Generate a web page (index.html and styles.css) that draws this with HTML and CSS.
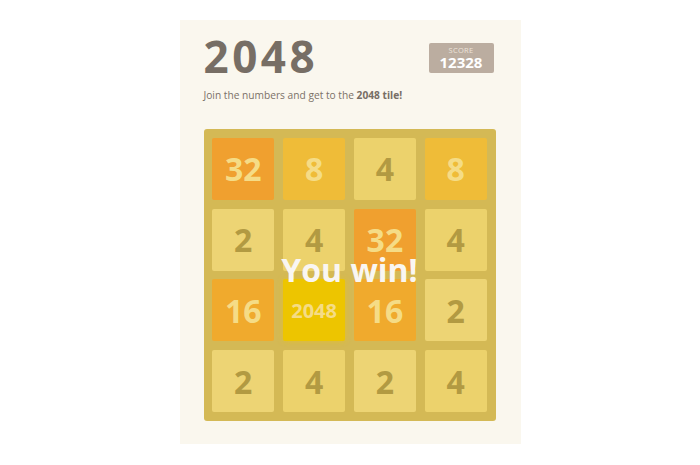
FILE: index.html
```html
<!DOCTYPE html>
<html>
<head>
<meta charset="utf-8">
<link rel="stylesheet" href="styles.css">
</head>
<body>
<div class="container">
  <div class="heading">
    <h1 class="title">2048</h1>
    <div class="score">
      <span class="score-label">SCORE</span>
      <span class="score-value">12328</span>
    </div>
  </div>
  <p class="intro">Join the numbers and get to the <strong>2048 tile!</strong></p>
  <div class="board">
    <div class="tile t32">32</div>
    <div class="tile t8">8</div>
    <div class="tile t4">4</div>
    <div class="tile t8">8</div>
    <div class="tile t2">2</div>
    <div class="tile t4">4</div>
    <div class="tile t32">32</div>
    <div class="tile t4">4</div>
    <div class="tile t16">16</div>
    <div class="tile t2048">2048</div>
    <div class="tile t16">16</div>
    <div class="tile t2">2</div>
    <div class="tile t2">2</div>
    <div class="tile t4">4</div>
    <div class="tile t2">2</div>
    <div class="tile t4">4</div>
    <div class="message"><p>You win!</p></div>
  </div>
</div>
</body>
</html>
```

FILE: styles.css
```css
html, body {
  margin: 0;
  padding: 0;
  background: #ffffff;
  font-family: "Open Sans", "Noto Sans", sans-serif;
  color: #776e65;
}
.container {
  width: 341px;
  box-sizing: border-box;
  margin: 20px auto 0;
  padding: 14px 24px 23px;
  background: #faf7ee;
}
.heading {
  display: flex;
  justify-content: space-between;
  align-items: flex-start;
}
.title {
  margin: 0;
  font-size: 44px;
  line-height: 44px;
  font-weight: 700;
  letter-spacing: 3.5px;
  color: #776e65;
}
.score {
  margin-top: 9px;
  margin-right: 3px;
  width: 65px;
  height: 30px;
  background: #bbada0;
  border-radius: 2px;
  display: flex;
  flex-direction: column;
  align-items: center;
  justify-content: center;
}
.score-label {
  font-size: 7.5px;
  line-height: 8px;
  color: #eee4da;
  letter-spacing: 0.3px;
}
.score-value {
  font-size: 15px;
  line-height: 16px;
  font-weight: 700;
  color: #ffffff;
}
.intro {
  margin: 10px 0 26px;
  font-size: 10.2px;
  line-height: 15px;
  color: #7a7168;
}
.intro strong {
  font-weight: 700;
  color: #776e65;
}
.board {
  position: relative;
  width: 292px;
  height: 292px;
  box-sizing: border-box;
  padding: 8.7px;
  background: #d4b955;
  border-radius: 3px;
  display: grid;
  grid-template-columns: repeat(4, 1fr);
  grid-template-rows: repeat(4, 1fr);
  gap: 8.7px;
}
.tile {
  border-radius: 2px;
  display: flex;
  align-items: center;
  justify-content: center;
  font-size: 32px;
  font-weight: 700;
  color: #f5dc86;
}
.t2 { background: #edd474; color: #b29a42; }
.t4 { background: #ecd26c; color: #b29a42; }
.t8 { background: #efbc38; }
.t16 { background: #f0aa2d; }
.t32 { background: #f0a02f; }
.t2048 {
  background: #edc500;
  font-size: 20px;
  box-shadow: 0 0 6px rgba(240, 200, 0, 0.45);
}
.message {
  position: absolute;
  top: 0;
  left: 0;
  right: 0;
  bottom: 0;
  display: flex;
  justify-content: center;
  align-items: flex-start;
}
.message p {
  margin: 125px 0 0;
  font-size: 32px;
  line-height: 32px;
  font-weight: 700;
  color: #f9f6f2;
}
```
